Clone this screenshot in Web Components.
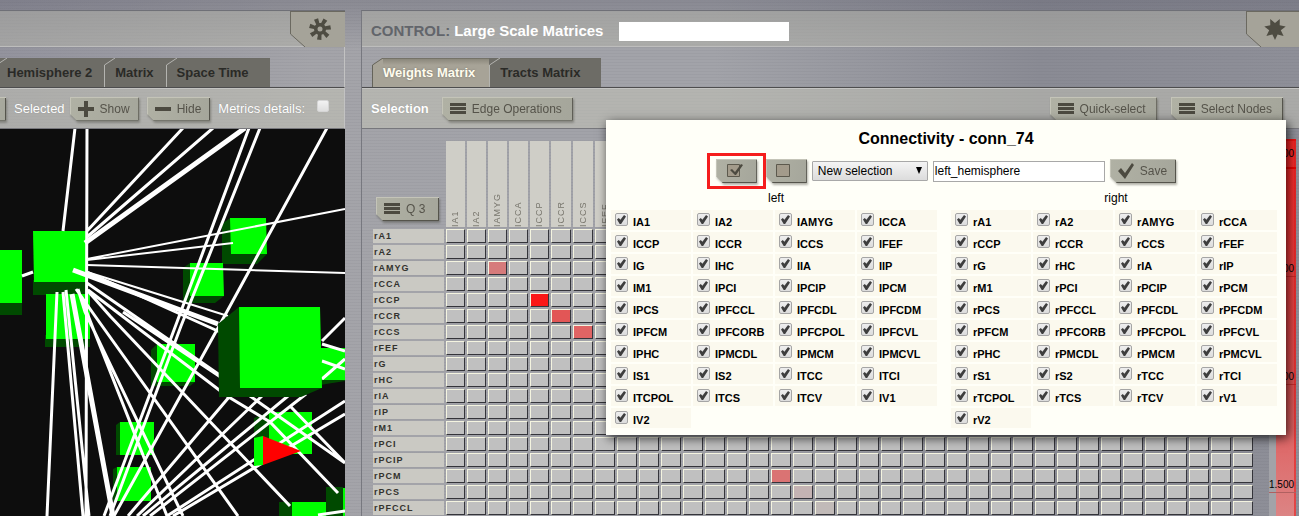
<!DOCTYPE html>
<html lang="en">
<head>
<meta charset="utf-8">
<title>Large Scale Matrices</title>
<style>
  html, body { margin: 0; height: 100%; }
  body {
    overflow: hidden;
    font-family: "Liberation Sans", Arial, sans-serif;
    font-size: 13px;
    color: #000;
  }
</style>
</head>
<body>
<tvb-app></tvb-app>

<script>
const AREAS = ("A1 A2 AMYG CCA CCP CCR CCS FEF G HC IA IP M1 PCI PCIP PCM PCS PFCCL PFCDL PFCDM " +
  "PFCM PFCORB PFCPOL PFCVL PHC PMCDL PMCM PMCVL S1 S2 TCC TCI TCPOL TCS TCV V1 V2").split(" ");

function define(name, html, setup) {
  const template = document.createElement("template");
  template.innerHTML = html;
  customElements.define(name, class extends HTMLElement {
    constructor() {
      super();
      this.attachShadow({ mode: "open" }).append(template.content.cloneNode(true));
    }
    connectedCallback() {
      if (setup && !this.ready) { this.ready = true; setup(this, this.shadowRoot); }
    }
  });
}

function starPoints(count, cx, cy, outer, inner, start) {
  const points = [];
  for (let i = 0; i < count * 2; i++) {
    const r = i % 2 ? inner : outer;
    const a = start + Math.PI * i / count;
    points.push((cx + r * Math.cos(a)).toFixed(1) + "," + (cy + r * Math.sin(a)).toFixed(1));
  }
  return points.join(" ");
}

function gearPath(teeth, cx, cy, outer, inner) {
  let d = "";
  for (let i = 0; i < teeth; i++) {
    const a = Math.PI * 2 * i / teeth - 0.15;
    [[inner, -0.32], [outer, -0.2], [outer, 0.2], [inner, 0.26]].forEach(([r, o]) => {
      d += (d ? "L" : "M") + (cx + r * Math.cos(a + o)).toFixed(1) + " " + (cy + r * Math.sin(a + o)).toFixed(1);
    });
  }
  return d + "Z";
}

const ICONS = {
  menu: '<path d="M0 2h16v3H0zM0 6h16v3H0zM0 10h16v3H0z"/>',
  plus: '<path d="M6 0h4v6h6v4h-6v6H6v-6H0V6h6z"/>',
  minus: '<path d="M0 6h16v4H0z"/>',
  check: '<path d="M0 8l3-3 4 5 7-10 2 2L7 16z"/>',
  checkbox: '<path d="M.5 1.500h12v12h-12z" fill="#a39b8b" stroke="#5c594d"/><path d="M3 7l2-1 3 3 6-8 2 1-7 10H8z"/>',
  square: '<path d="M-.5 1.500h13v12h-13z" fill="#a39b8b" stroke="#5c594d"/>'
};

define("tvb-icon", `
  <style>
    :host { display: block; width: 16px; height: 16px; }
    svg { display: block; width: 16px; height: 16px; fill: #4c4a40; overflow: visible; }
  </style>
  <svg viewBox="0 0 16 16" aria-hidden="true"></svg>`,
  (host, root) => { root.querySelector("svg").innerHTML = ICONS[host.getAttribute("name")]; });

define("tvb-button", `
  <style>
    :host { display: block; flex: none; filter: drop-shadow(1px 2px 1px rgba(60,60,50,.4)); }
    button {
      display: flex; align-items: center; gap: 6px;
      width: 100%; height: 24px; margin: 0; padding: 0 9px 0 8px;
      border: 0; border-radius: 0; color: #55534a;
      font: 12px/24px "Liberation Sans", Arial, sans-serif; white-space: nowrap;
      background: linear-gradient(100deg, #b0b1a4, #a5a69b);
      box-shadow: inset 1px 1px #c4c4b8, inset -1px -1px #55544c;
      clip-path: polygon(0 0, 100% 0, 100% 100%, 7px 100%, 0 17px);
    }
    :host([wide]) button { padding-right: 11px; }
    :host([icon-only]) button { padding: 0 0 0 11px; }
  </style>
  <button type="button"><tvb-icon></tvb-icon><slot></slot></button>`,
  (host, root) => {
    const icon = root.querySelector("tvb-icon"), button = root.querySelector("button");
    if (host.hasAttribute("icon")) {
      const fresh = document.createElement("tvb-icon");
      fresh.setAttribute("name", host.getAttribute("icon"));
      icon.replaceWith(fresh);
    } else icon.remove();
    if (host.hasAttribute("label")) button.setAttribute("aria-label", host.getAttribute("label"));
  });

define("tvb-tab", `
  <style>
    :host { display: block; flex: none; --fill: #6d6c66; --edge: #b4b4b0; --behind: #6d6c66; }
    :host([active]) { --fill: #a7a397; --edge: #65635a; --behind: transparent; }
    button {
      display: flex; align-items: stretch; height: 29px; padding: 0; margin: 0; border: 0;
      background: var(--behind); color: #2a2a27;
      font: bold 13px/30px "Liberation Sans", Arial, sans-serif; white-space: nowrap;
    }
    svg { display: block; width: 11px; height: 29px; flex: none; }
    polygon { fill: var(--fill); }
    polyline { fill: none; stroke: var(--edge); }
    span { background: var(--fill); padding-right: 12px; }
    :host([last]) span { padding-right: 21px; }
    :host([first]) svg { width: 7px; }
    :host([active]) button { color: #fffcee; }
    :host([active]) span { padding-right: 14px; background: linear-gradient(#5f5d54 0, #8b887c 1px, #a7a397 7px); text-shadow: 0 0 2px #77746a; }
  </style>
  <button type="button" role="tab">
    <svg viewBox="0 0 11 29" preserveAspectRatio="xMaxYMin slice" aria-hidden="true">
      <polygon points="0,29 0,7 10,0 11,0 11,29"/><polyline points="0.500,29 0.500,7 11,0"/>
    </svg><span><slot></slot></span>
  </button>`);

define("tvb-corner", `
  <style>
    :host { display: block; width: 55px; height: 36px; flex: none; }
    :host([glyph=star]) { width: 53px; }
    button { display: block; width: 100%; height: 100%; padding: 0; border: 0; background: none; overflow: hidden; }
    svg { display: block; width: 55px; height: 36px; }
  </style>
  <button type="button">
    <svg viewBox="0 0 55 36" aria-hidden="true">
      <path d="M.5 0H55V36H15L.5 23Z" fill="#a5a399"/>
      <path d="M.5 0V23L15 36M0 .5H55" fill="none" stroke="#6b6960"/>
      <g fill="#4e4c42" class="glyph"></g>
    </svg>
  </button>`,
  (host, root) => {
    const gear = host.getAttribute("glyph") === "gear";
    root.querySelector("button").setAttribute("aria-label", gear ? "Settings" : "Configuration");
    root.querySelector(".glyph").innerHTML = gear
      ? '<path d="' + gearPath(7, 30, 18, 11, 6) + '"/><circle cx="30" cy="18" r="2.500" fill="#a5a399"/>'
      : '<polygon points="' + starPoints(7, 29, 18, 11, 6, Math.PI / 2) + '"/>';
  });

define("tvb-panel", `
  <style>
    :host { display: flex; flex-direction: column; position: relative; min-width: 0; min-height: 0; box-sizing: border-box; border-top: 1px solid #6f7077; }
    header {
      display: flex; justify-content: space-between; height: 35px; flex: none;
      border-bottom: 1px solid #bdbdbc; background: rgba(182,182,172,.5);
    }
    ::slotted([slot=corner]) { margin-left: auto; }
    nav { display: flex; align-items: flex-end; height: 40px; flex: none; border-bottom: 1px solid #4d4d4e; }
    .tools {
      display: flex; align-items: center; height: 39px; flex: none;
      border-top: 1px solid #c4c4c2; border-bottom: 1px solid #77777c;
      background: rgba(198,198,184,.5);
    }
    nav, .tools { border-right: var(--bar-edge, 0); }
    .tools slot, header slot[name=title] { display: flex; flex: 1; align-items: center; }
    .body { flex: 1; min-height: 0; overflow: hidden; }
  </style>
  <header><slot name="title"></slot><slot name="corner"></slot></header>
  <nav role="tablist"><slot name="tabs"></slot></nav>
  <div class="tools"><slot name="tools"></slot></div>
  <div class="body"><slot></slot></div>
  <slot name="overlay"></slot>`);

define("brain-view", `
  <style>
    :host { display: block; height: 100%; background: #0d0d0d; overflow: hidden; }
    svg { display: block; width: 100%; height: 100%; }
    .d { fill: #004a00; } .g { fill: #00ff00; }
    .l { stroke: #fff; stroke-width: 3; fill: none; }
    .n { stroke-width: 2; } .w { stroke-width: 5; }
  </style>
  <svg viewBox="0 129 345 387" preserveAspectRatio="xMinYMin slice" role="img" aria-label="3D connectivity view">
    <path class="d" d="M0 302H22V315H0ZM33 280H87V295H33ZM45 335H90V347H45ZM230 218L222 224V264H257L267 254ZM190 263L183 268V303H215L224 296ZM157 344L151 350V386H190L195 382ZM320 380V385L345 381V378ZM120 422L116 425V455H120ZM117 467L113 469V501H117ZM269 412L254 418V440H269ZM279 502H292V516H279ZM326 487H343V516H326Z"/>
    <path class="g" d="M0 250H22V303H0ZM46 294H90V339H46ZM230 218H266L267 254H231ZM190 263H223L224 296H190ZM157 344H195V382H157ZM320 348H345V380H320ZM120 422H154V455H120ZM117 467H151V501H117ZM269 412H312V454H269ZM292 502H326V516H292ZM343 488H345V516H343Z"/>
    <path class="g" d="M33 231H87V282H34Z"/>
    <path class="l" d="M75 128L63 231M87 128L86 516M87 231L183 128M87 237L213 128M249 128L177 322L104 516M260 128L181 326L110 516M327 128L218 328L114 516M87 272L220 332M123 312L228 382M87 283L250 396L345 463M88 290L227 396L270 422L338 493M87 290L110 316L290 506M76 289L95 316L238 516M80 295L167 516M78 289L85 312L183 516M63 292L83 516M66 290L89 516M128 516L230 396M137 516L262 396M143 516L288 396M150 516L306 394M167 516L345 401M173 516L345 414M322 341L345 318M322 344L345 351M322 361L345 369M322 379L345 359M318 515L345 511M22 276L33 272M291 407L345 463M57 292L47 516"/>
    <path class="l n" d="M87 259L345 209M87 260L233 243M87 265L345 273M87 272L228 316"/>
    <path class="l w" d="M85 243L245 128M73 270L218 324M72 294L113 516"/>
    <path class="d" d="M239 307L218 324L219 397H301L322 388Z"/>
    <path class="g" d="M239 307H320L322 388H240ZM254 438L263 436V465L254 466Z"/>
    <path fill="#f00" d="M263 436L301 451L263 465Z"/>
  </svg>`);

define("matrix-view", `
  <style>
    :host { display: block; flex: 1; min-width: 0; }
    table { width: 100%; table-layout: fixed; border-collapse: separate; border-spacing: 2px; }
    col.names { width: 71px; } col.slim { width: 19px; }
    th, td { padding: 0; box-sizing: border-box; height: 14px; overflow: hidden; }
    thead td, thead th { height: 86px; vertical-align: bottom; }
    thead tvb-button { margin: 0 5px 6px 3px; }
    thead th { background: #cfcec7; }
    thead th span {
      display: block; writing-mode: vertical-rl; rotate: 180deg; line-height: 17px; margin: 0 auto; height: 84px;
      font-size: 9px; font-weight: normal; letter-spacing: 1px; color: #77756c; width: 17px; text-align: left;
    }
    tbody th { background: #cac9c3; text-align: left; padding-left: 1px; font: bold 9px/13px "Liberation Sans", Arial, sans-serif; letter-spacing: 1px; color: #33322e; }
    tbody td { background: var(--heat, #c0c0c0); border: 1px solid; border-color: #f4f4e0 #34343a #34343a #f4f4e0; line-height: 0; }
  </style>
  <table>
    <colgroup><col class="names"></colgroup>
    <thead><tr><td><tvb-button icon="menu">Q 3</tvb-button></td></tr></thead>
    <tbody></tbody>
  </table>`,
  (host, root) => {
    const heat = { "AMYG-2": "#d67b7b", "CCP-4": "#fa1616", "CCR-5": "#e25656", "CCS-6": "#e06464", "PCM-15": "#da7373", "PCS-16": "#c4b3b3", "PFCCL-17": "#c1bab8" };
    const cols = root.querySelector("colgroup"), head = root.querySelector("thead tr"), body = root.querySelector("tbody");
    AREAS.forEach((area, i) => {
      const col = document.createElement("col");
      if (i < 5) col.className = "slim";
      cols.append(col);
      const th = document.createElement("th");
      th.scope = "col";
      if (i < 8) th.innerHTML = "<span>I" + area + "</span>";
      head.append(th);
    });
    AREAS.slice(0, 18).forEach(area => {
      const row = body.insertRow();
      row.innerHTML = '<th scope="row">r' + area + "</th>";
      AREAS.forEach((_, i) => {
        const cell = row.insertCell(), color = heat[area + "-" + i];
        if (color) cell.style.setProperty("--heat", color);
      });
    });
  });

define("color-scale", `
  <style>
    :host {
      display: block; width: 27px; flex: none; box-sizing: border-box;
      border-top: 2px solid #f01010;
      background: linear-gradient(90deg, #a2a3a8 7px, transparent 7px),
                  linear-gradient(90deg, transparent 25px, rgba(230,30,30,.6) 25px),
                  linear-gradient(#fa2626, #e05252 65%, #dc8484);
    }
    div { box-sizing: border-box; height: 108px; border-bottom: 1px solid rgba(190,30,30,.7); padding: 93px 4px 0 0; text-align: right; font-size: 10px; line-height: 14px; }
    div:first-of-type { height: 28px; padding-top: 6px; border-bottom: 2px solid #e00; }
    div:last-of-type { border-bottom: 1px solid #b06060; }
  </style>
  <div>3.000</div><div>2.500</div><div>2.000</div><div>1.500</div>`);

define("matrix-area", `
  <style>
    :host { display: flex; gap: 14px; height: 100%; box-sizing: border-box; padding: 10px 3px 0 9px; }
  </style>
  <slot></slot>`);

define("node-group", `
  <style>
    :host { display: block; flex: 1; min-width: 0; box-sizing: border-box; padding: 0 9px 0 5px; }
    fieldset { display: block; margin: 0; padding: 0; border: 0; min-width: 0; }
    legend { display: block; width: 100%; box-sizing: border-box; padding: 0 0 4px 4px; text-align: center; font-size: 12px; line-height: 16px; }
    ul { display: grid; grid-template-columns: repeat(4, 1fr); grid-auto-rows: 20px; gap: 2px; margin: 0; padding: 0; list-style: none; }
    li { background: #fbf9ee; }
    label { display: flex; align-items: flex-start; gap: 5px; padding: 3px 0 0 4px; font: bold 11px/18px "Liberation Sans", Arial, sans-serif; }
    input {
      appearance: none; flex: none; width: 13px; height: 13px; margin: 0; padding: 1px;
      border: 1px solid #a5a5a5; border-radius: 2px; background: linear-gradient(#eee, #dcdcdc); box-sizing: border-box;
    }
    input:checked::before {
      content: ""; display: block; width: 9px; height: 9px; background: #3e3e3e;
      clip-path: polygon(0 50%, 20% 34%, 38% 52%, 78% 0, 100% 16%, 46% 100%, 30% 100%);
    }
  </style>
  <fieldset><legend><slot></slot></legend><ul></ul></fieldset>`,
  (host, root) => {
    const list = root.querySelector("ul"), prefix = host.getAttribute("prefix");
    AREAS.forEach(area => {
      const item = document.createElement("li");
      item.innerHTML = '<label><input type="checkbox" checked><span>' + prefix + area + "</span></label>";
      list.append(item);
    });
  });

define("node-picker", `
  <style>
    :host {
      display: block; position: absolute; top: 109px; right: 13px; width: 680px; box-sizing: border-box;
      padding: 9px 0 7px; background: #fffff8; box-shadow: 2px 3px 10px rgba(0,0,0,.75);
    }
    h2 { margin: 0; text-align: center; font-size: 16px; line-height: 20px; }
    .row { display: flex; justify-content: center; align-items: center; gap: 5px; margin: 10px 0 7px; }
    .row tvb-button[icon-only] { width: 41px; }
    .mark { position: relative; margin-right: 4px; }
    .mark::after { content: ""; position: absolute; inset: -6px -9px; border: 3px solid #f51d1d; }
    .choice { position: relative; display: block; }
    .choice svg { position: absolute; right: 5px; top: 5px; width: 8px; height: 8px; pointer-events: none; }
    select {
      appearance: none; display: block; width: 116px; height: 20px; margin: 0; padding: 0 5px; border: 1px solid #a8a8a8;
      border-radius: 1px; background: linear-gradient(#f4f4f4, #dcdcdc); color: #000; font: 12px "Liberation Sans", Arial, sans-serif;
    }
    input { width: 172px; height: 21px; box-sizing: border-box; margin: 0; padding: 0 1px; border: 1px solid #a8a8a8; border-radius: 0; background: #fff; color: #000; font: 12px "Liberation Sans", Arial, sans-serif; }
    .groups { display: flex; }
  </style>
  <h2>Connectivity - conn_74</h2>
  <div class="row">
    <div class="mark"><tvb-button icon="checkbox" icon-only label="Select all"></tvb-button></div>
    <tvb-button icon="square" icon-only label="Select none"></tvb-button>
    <div class="choice">
      <select aria-label="Selection"><option>New selection</option></select>
      <svg viewBox="0 0 8 8" aria-hidden="true"><path d="M1 1h6L4 8z"/></svg>
    </div>
    <input type="text" value="left_hemisphere" aria-label="Selection name">
    <tvb-button icon="check">Save</tvb-button>
  </div>
  <div class="groups"><node-group prefix="I">left</node-group><node-group prefix="r">right</node-group></div>`);

define("tvb-app", `
  <style>
    :host {
      display: grid; grid-template-columns: minmax(0, 345fr) minmax(0, 938fr); grid-template-rows: minmax(0, 1fr); gap: 16px;
      height: 100vh; box-sizing: border-box; padding-top: 10px;
      background:
        repeating-linear-gradient(transparent 0 2px, rgba(60,60,70,.05) 2px 3px),
        linear-gradient(rgba(90,90,105,.35), transparent 50px),
        linear-gradient(90deg, #93939d, #a4a4a9 24%, #a2a3a9 40%, #a2a3a9 55%, #8a8b94 80%, #8e8f98);
    }
    .left { --bar-edge: 1px solid #c2c2c2; }
    .right { border-left: 1px solid #77787f; }
    .title { display: flex; align-items: center; margin: 0 0 0 9px; padding-top: 3px; font-size: 15px; color: #fff; white-space: nowrap; gap: 4px; }
    .title .kind { color: #62656b; }
    .title-input { width: 170px; height: 19px; box-sizing: border-box; margin: 5px 0 0 16px; padding: 0 4px; border: 0; background: #fff; }
    .first-tab { margin-left: 10px; }
    .text { color: #fff; white-space: nowrap; text-shadow: 0 0 1px #888; }
    .left .text { margin-left: 8px; }
    .left tvb-button.next { margin-left: 8px; }
    .left tvb-button.show { margin-left: 5px; }
    .cut { width: 26px; margin-left: -20px; }
    .tick { appearance: none; width: 12px; height: 12px; box-sizing: border-box; margin: 0 0 5px 12px; border: 1px solid #d5d5d5; border-radius: 2px; background: linear-gradient(#f2f2f2, #dedede); }
    .bold { font-weight: bold; margin: 0 13px 0 9px; }
    .push { margin-left: auto; }
    .end { margin: 0 16px 0 14px; }
  </style>
  <tvb-panel class="left">
    <tvb-corner slot="corner" glyph="gear"></tvb-corner>
    <tvb-tab slot="tabs" first>Hemisphere 2</tvb-tab>
    <tvb-tab slot="tabs">Matrix</tvb-tab>
    <tvb-tab slot="tabs" last>Space Time</tvb-tab>
    <tvb-button slot="tools" class="cut" label="All"></tvb-button>
    <span slot="tools" class="text">Selected</span>
    <tvb-button slot="tools" class="show" icon="plus">Show</tvb-button>
    <tvb-button slot="tools" class="next" icon="minus">Hide</tvb-button>
    <label slot="tools" class="text" for="metrics">Metrics details:</label>
    <input slot="tools" class="tick" id="metrics" type="checkbox">
    <brain-view></brain-view>
  </tvb-panel>
  <tvb-panel class="right">
    <h1 slot="title" class="title"><span class="kind">CONTROL:</span><span>Large Scale Matrices</span></h1>
    <input slot="title" class="title-input" type="text" aria-label="Title">
    <tvb-corner slot="corner" glyph="star"></tvb-corner>
    <tvb-tab slot="tabs" class="first-tab" active>Weights Matrix</tvb-tab>
    <tvb-tab slot="tabs" last>Tracts Matrix</tvb-tab>
    <span slot="tools" class="text bold">Selection</span>
    <tvb-button slot="tools" wide icon="menu">Edge Operations</tvb-button>
    <tvb-button slot="tools" class="push" wide icon="menu">Quick-select</tvb-button>
    <tvb-button slot="tools" class="end" wide icon="menu">Select Nodes</tvb-button>
    <matrix-area><matrix-view></matrix-view><color-scale></color-scale></matrix-area>
    <node-picker slot="overlay"></node-picker>
  </tvb-panel>`);
</script>
</body>
</html>
